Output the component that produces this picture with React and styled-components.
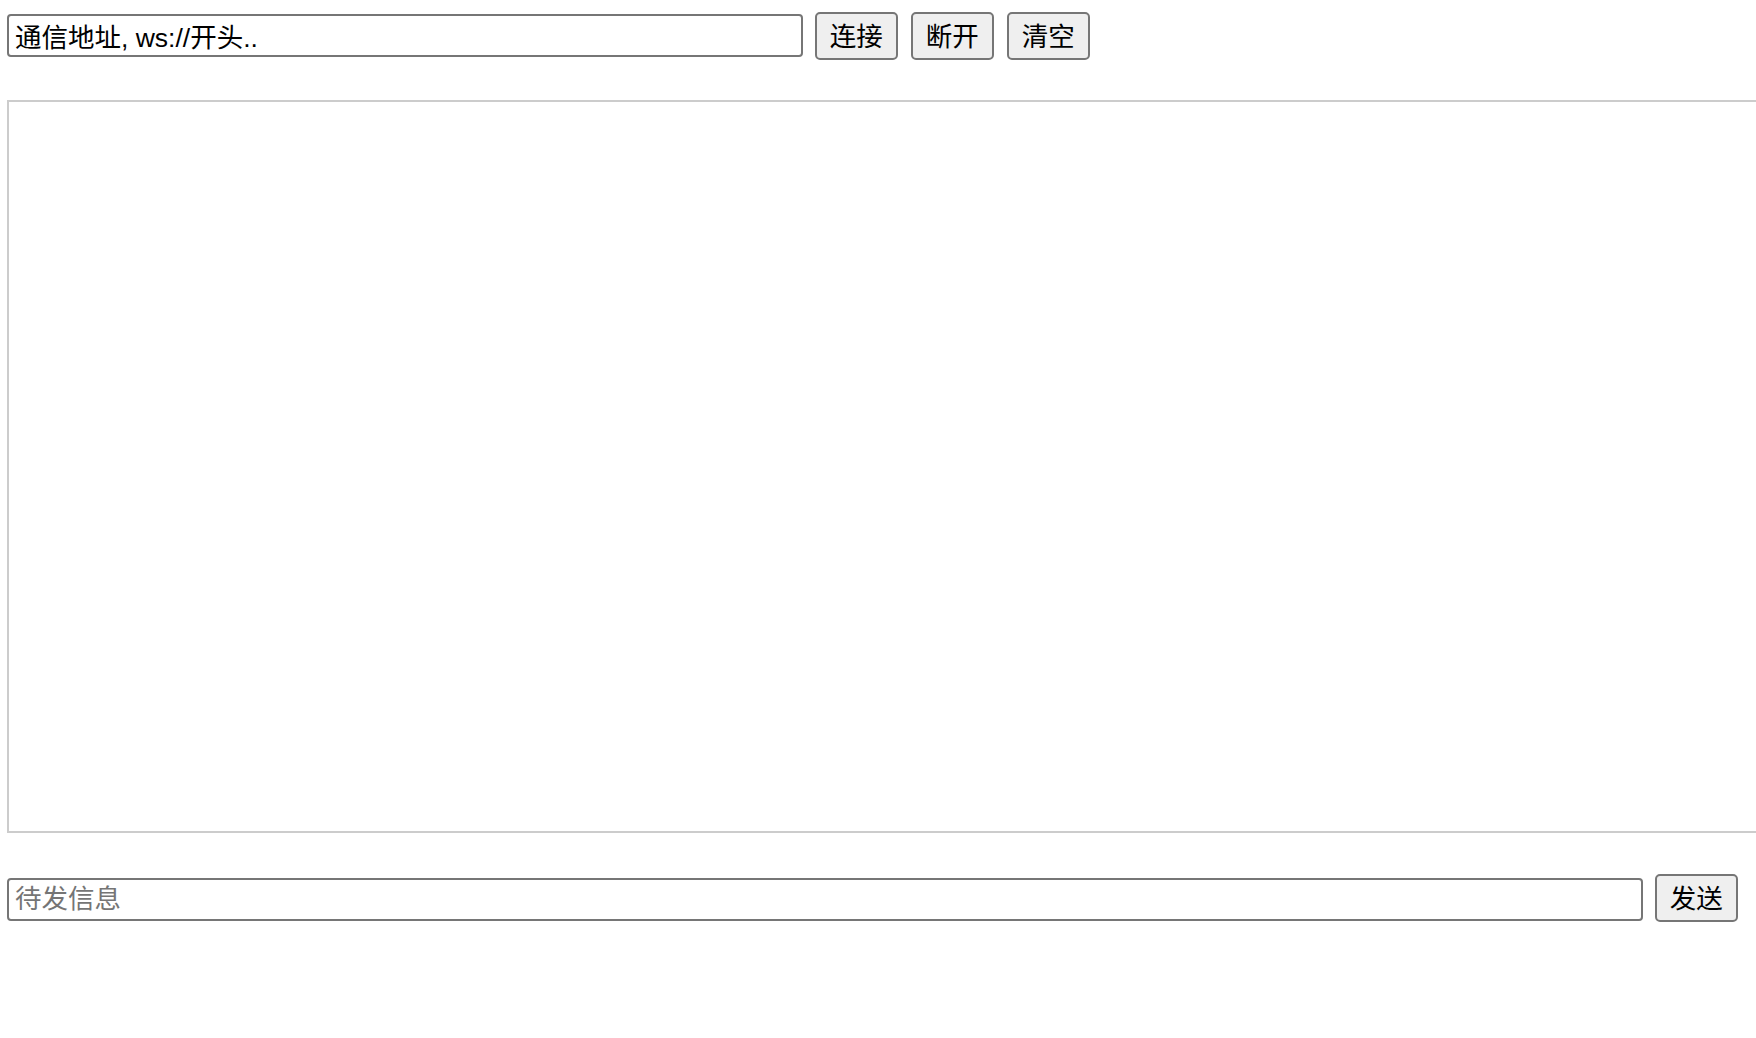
import React from "react";
import styled, { createGlobalStyle } from "styled-components";

const Global = createGlobalStyle`
  html, body { margin: 0; padding: 0; background: #fff; overflow: hidden; }
  body { font-family: "Liberation Sans", "Noto Sans CJK SC", sans-serif; }
`;

const Page = styled.div`
  padding: 12px 0 0 7px;
  width: 1749px;
  overflow: hidden;
`;

const Row = styled.div`
  display: flex;
  align-items: flex-start;
  gap: 12.5px;
  margin-top: ${(p) => p.$top || 0}px;
`;

const Field = styled.input`
  box-sizing: border-box;
  width: ${(p) => p.$w}px;
  height: 43px;
  margin-top: ${(p) => p.$dy || 0}px;
  margin-right: -1px;
  border: 2px solid #767676;
  border-radius: 4px;
  padding: 0 6px;
  font-family: "Liberation Sans", "Noto Sans CJK SC", sans-serif;
  font-size: 26.5px;
  color: #000;
  background: #fff;
  outline: none;
  &::placeholder { color: #757575; }
`;

const Button = styled.button`
  box-sizing: border-box;
  width: 83.5px;
  height: 48px;
  border: 2px solid #767676;
  border-radius: 5px;
  background: #efefef;
  color: #000;
  padding: 0 0 3px;
  font-family: "Liberation Sans", "Noto Sans CJK SC", sans-serif;
  font-size: 26.5px;
  cursor: pointer;
`;

const Log = styled.div`
  box-sizing: border-box;
  margin-top: 40px;
  width: 1800px;
  height: 733px;
  border: 2px solid #cccccc;
  background: #fff;
`;

export default function App() {
  return (
    <>
      <Global />
      <Page>
        <Row>
          <Field $w={796} $dy={2} defaultValue="通信地址, ws://开头.." />
          <Button>连接</Button>
          <Button>断开</Button>
          <Button>清空</Button>
        </Row>
        <Log />
        <Row $top={41}>
          <Field $w={1636} $dy={4} placeholder="待发信息" />
          <Button>发送</Button>
        </Row>
      </Page>
    </>
  );
}
